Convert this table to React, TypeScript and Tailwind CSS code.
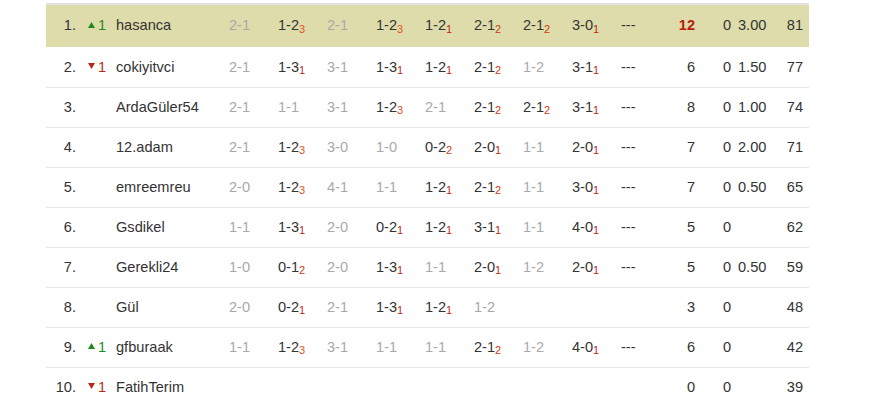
type Score = { v: string; g?: boolean; s?: number };

type Row = {
  rank: string;
  move?: "up" | "down";
  name: string;
  scores: Score[];
  pts: string;
  zero: string;
  avg: string;
  total: string;
  active?: boolean;
};

const g = (v: string): Score => ({ v, g: true });
const d = (v: string, s: number): Score => ({ v, s });
const dash: Score = { v: "---" };

const rows: Row[] = [
  {
    rank: "1.",
    move: "up",
    name: "hasanca",
    scores: [g("2-1"), d("1-2", 3), g("2-1"), d("1-2", 3), d("1-2", 1), d("2-1", 2), d("2-1", 2), d("3-0", 1), dash],
    pts: "12",
    zero: "0",
    avg: "3.00",
    total: "81",
    active: true,
  },
  {
    rank: "2.",
    move: "down",
    name: "cokiyitvci",
    scores: [g("2-1"), d("1-3", 1), g("3-1"), d("1-3", 1), d("1-2", 1), d("2-1", 2), g("1-2"), d("3-1", 1), dash],
    pts: "6",
    zero: "0",
    avg: "1.50",
    total: "77",
  },
  {
    rank: "3.",
    name: "ArdaGüler54",
    scores: [g("2-1"), g("1-1"), g("3-1"), d("1-2", 3), g("2-1"), d("2-1", 2), d("2-1", 2), d("3-1", 1), dash],
    pts: "8",
    zero: "0",
    avg: "1.00",
    total: "74",
  },
  {
    rank: "4.",
    name: "12.adam",
    scores: [g("2-1"), d("1-2", 3), g("3-0"), g("1-0"), d("0-2", 2), d("2-0", 1), g("1-1"), d("2-0", 1), dash],
    pts: "7",
    zero: "0",
    avg: "2.00",
    total: "71",
  },
  {
    rank: "5.",
    name: "emreemreu",
    scores: [g("2-0"), d("1-2", 3), g("4-1"), g("1-1"), d("1-2", 1), d("2-1", 2), g("1-1"), d("3-0", 1), dash],
    pts: "7",
    zero: "0",
    avg: "0.50",
    total: "65",
  },
  {
    rank: "6.",
    name: "Gsdikel",
    scores: [g("1-1"), d("1-3", 1), g("2-0"), d("0-2", 1), d("1-2", 1), d("3-1", 1), g("1-1"), d("4-0", 1), dash],
    pts: "5",
    zero: "0",
    avg: "",
    total: "62",
  },
  {
    rank: "7.",
    name: "Gerekli24",
    scores: [g("1-0"), d("0-1", 2), g("2-0"), d("1-3", 1), g("1-1"), d("2-0", 1), g("1-2"), d("2-0", 1), dash],
    pts: "5",
    zero: "0",
    avg: "0.50",
    total: "59",
  },
  {
    rank: "8.",
    name: "Gül",
    scores: [g("2-0"), d("0-2", 1), g("2-1"), d("1-3", 1), d("1-2", 1), g("1-2")],
    pts: "3",
    zero: "0",
    avg: "",
    total: "48",
  },
  {
    rank: "9.",
    move: "up",
    name: "gfburaak",
    scores: [g("1-1"), d("1-2", 3), g("3-1"), g("1-1"), g("1-1"), d("2-1", 2), g("1-2"), d("4-0", 1), dash],
    pts: "6",
    zero: "0",
    avg: "",
    total: "42",
  },
  {
    rank: "10.",
    move: "down",
    name: "FatihTerim",
    scores: [],
    pts: "0",
    zero: "0",
    avg: "",
    total: "39",
  },
];

const subColor: Record<number, string> = {
  1: "text-[#c8240f]",
  2: "text-[#d2380f]",
  3: "text-[#e0531c]",
};

function Move({ dir }: { dir?: "up" | "down" }) {
  if (!dir) return null;
  const up = dir === "up";
  return (
    <span
      className={
        "flex items-center gap-[3px] " +
        (up ? "text-[#1f8a1f]" : "text-[#b52a1a]")
      }
    >
      <svg width="7" height="6" viewBox="0 0 7 6" className="mb-[2px]">
        {up ? (
          <polygon points="3.5,0 7,6 0,6" fill="currentColor" />
        ) : (
          <polygon points="0,0 7,0 3.5,6" fill="currentColor" />
        )}
      </svg>
      <span>1</span>
    </span>
  );
}

function ScoreCell({ s }: { s?: Score }) {
  return (
    <div className="w-[49px] shrink-0 whitespace-nowrap">
      {s && (
        <span className={s.g ? "text-[#a9a9a9]" : "text-[#333]"}>
          {s.v}
          {s.s && (
            <sub className={"text-[11px] " + subColor[s.s]}>{s.s}</sub>
          )}
        </span>
      )}
    </div>
  );
}

export default function App() {
  return (
    <div className="min-h-screen bg-white font-['Liberation_Sans',Arial,sans-serif] text-[14.6px] text-[#333]">
      <div className="ml-[46px] mt-[3px] w-[763px] border-t-2 border-[#e2e2e2]">
        {rows.map((r) => (
          <div
            key={r.rank}
            className={
              "flex items-center border-b " +
              (r.active
                ? "h-[43px] bg-[#dfdcab] border-white"
                : "h-[40px] border-[#e4e4e4]")
            }
          >
            <div className="w-[30px] shrink-0 text-right">{r.rank}</div>
            <div className="w-[40px] shrink-0 pl-[12px]">
              <Move dir={r.move} />
            </div>
            <div className="w-[113px] shrink-0 truncate">{r.name}</div>
            {Array.from({ length: 9 }).map((_, i) => (
              <ScoreCell key={i} s={r.scores[i]} />
            ))}
            <div
              className={
                "w-[25px] shrink-0 text-right " +
                (r.active ? "font-bold text-[#b8200c]" : "")
              }
            >
              {r.pts}
            </div>
            <div className="w-[36px] shrink-0 text-right">{r.zero}</div>
            <div className="w-[45px] shrink-0 pl-[7px]">{r.avg}</div>
            <div className="w-[33px] shrink-0 pr-[6px] text-right">
              {r.total}
            </div>
          </div>
        ))}
      </div>
    </div>
  );
}
